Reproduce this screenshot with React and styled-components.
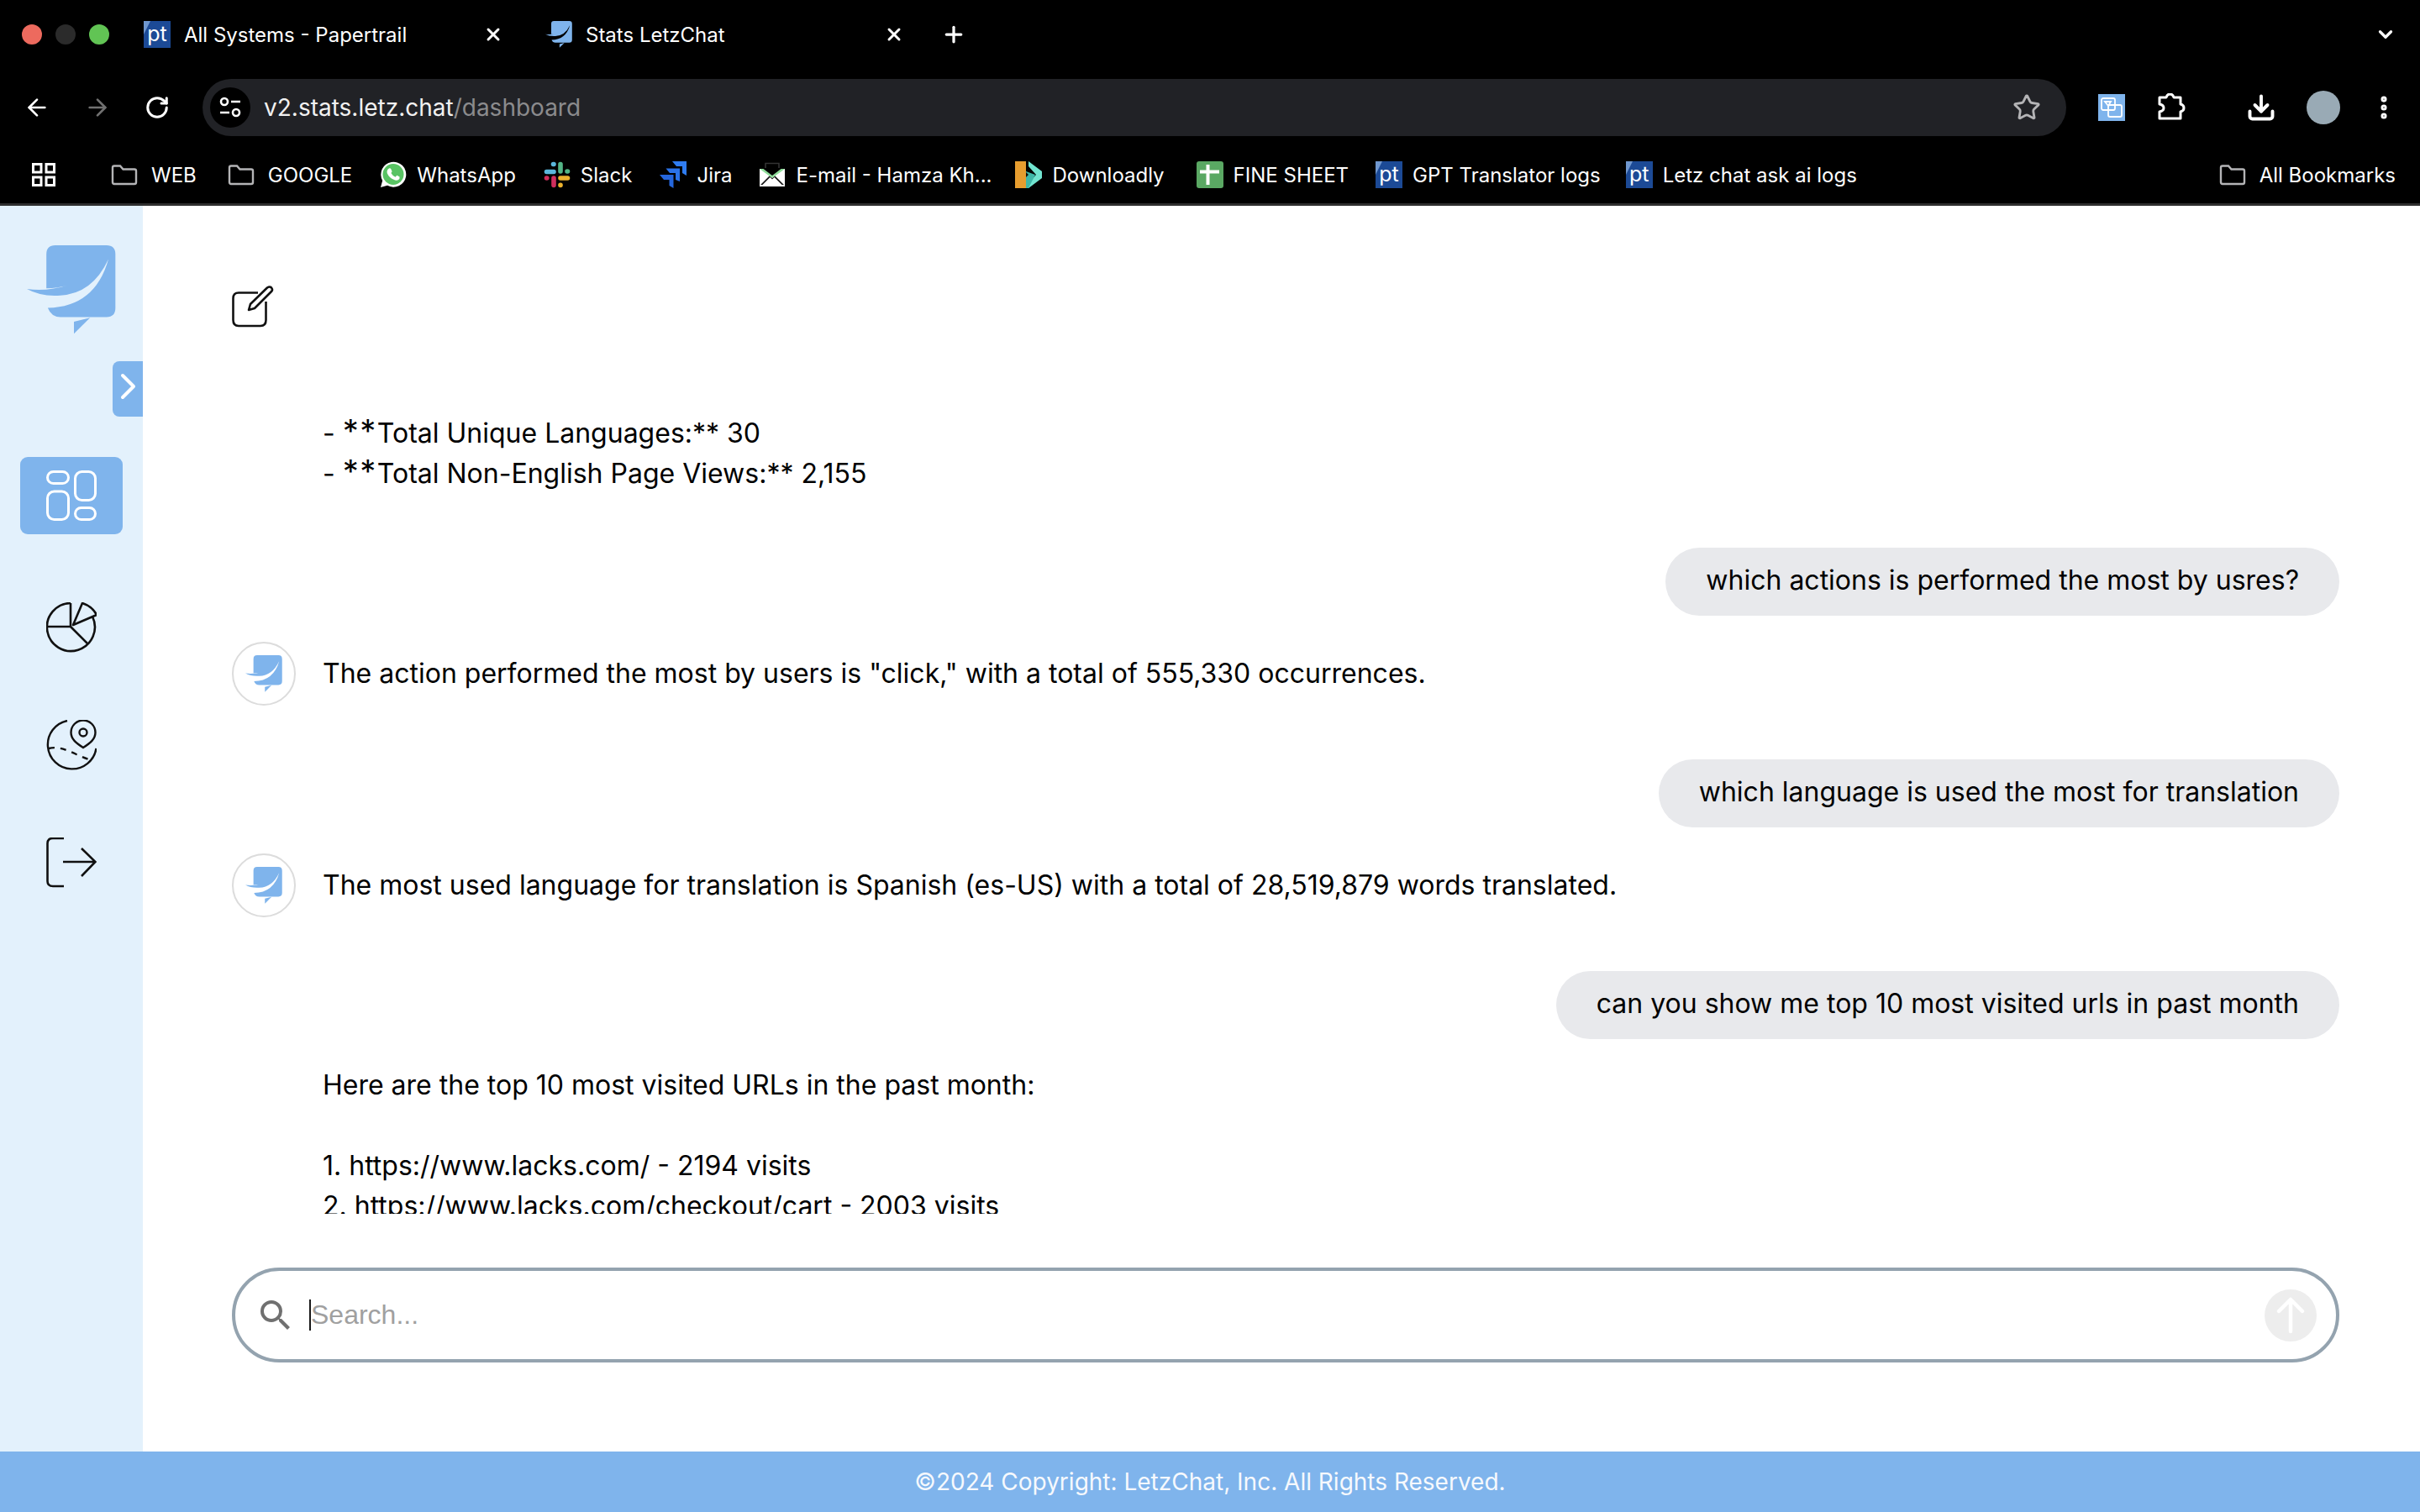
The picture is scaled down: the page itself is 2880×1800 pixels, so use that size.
import React from "react";
import styled, { createGlobalStyle } from "styled-components";
import {
  ArrowLeft,
  ArrowRight,
  RotateCw,
  Star,
  Download,
  MoreVertical,
  Plus,
  X,
  ChevronDown,
} from "lucide-react";
import { MdSearch } from "react-icons/md";

const GlobalStyle = createGlobalStyle`
  html, body {
    margin: 0;
    padding: 0;
    width: 2880px;
    height: 1800px;
    overflow: hidden;
    background: #fff;
    font-family: "Inter", "Liberation Sans", sans-serif;
  }
  * {
    box-sizing: border-box;
  }
`;

const Page = styled.div`
  width: 2880px;
  height: 1800px;
  display: flex;
  flex-direction: column;
`;

/* browser chrome */
const BrowserChrome = styled.header`
  height: 245px;
  flex: none;
  background: #000;
  color: #fff;
  border-bottom: 3px solid #2e2e2e;
  display: flex;
  flex-direction: column;
`;

const TabStrip = styled.div`
  height: 82px;
  display: flex;
  align-items: center;
  padding: 0 28px 0 26px;
`;

const TrafficLights = styled.div`
  display: flex;
  gap: 16px;
  margin-right: 41px;
`;

const Light = styled.span`
  width: 24px;
  height: 24px;
  border-radius: 50%;
  background: ${(p) => p.$color};
`;

const Tab = styled.div`
  width: ${(p) => p.$width}px;
  display: flex;
  align-items: center;
  gap: 16px;
  font-size: 24px;
  color: #fff;
  white-space: nowrap;
`;

const TabClose = styled(X)`
  margin-left: auto;
  margin-right: ${(p) => p.$inset}px;
  flex: none;
`;

const NewTab = styled(Plus)`
  margin-left: -14px;
`;

const TabMenu = styled(ChevronDown)`
  margin-left: auto;
`;

const Favicon = styled.span`
  width: 32px;
  height: 32px;
  flex: none;
  position: relative;
  background: #1c4a96;
  color: #fff;
  font-size: 25px;
  line-height: 30px;
  text-align: center;
  overflow: hidden;

  &::before {
    content: "";
    position: absolute;
    left: 0;
    top: 0;
    border-top: 16px solid #6f97cf;
    border-right: 8px solid transparent;
  }
`;

const Toolbar = styled.div`
  height: 68px;
  margin-top: 12px;
  display: flex;
  align-items: center;
  padding: 0 28px;
`;

const NavButtons = styled.div`
  display: flex;
  align-items: center;
  gap: 40px;
  margin-right: 39px;
`;

const Omnibox = styled.div`
  width: 2218px;
  height: 68px;
  flex: none;
  border-radius: 34px;
  background: #212226;
  display: flex;
  align-items: center;
  padding: 0 30px 0 9px;
  font-size: 28px;
`;

const SiteInfo = styled.span`
  width: 48px;
  height: 48px;
  flex: none;
  border-radius: 50%;
  background: #000;
  display: flex;
  align-items: center;
  justify-content: center;
  margin-right: 16px;
`;

const UrlHost = styled.span`
  color: #f1f1f1;
`;

const UrlPath = styled.span`
  color: #8b8b8d;
`;

const StarIcon = styled(Star)`
  margin-left: auto;
  color: #b4b4b6;
`;

const ToolbarActions = styled.div`
  display: flex;
  align-items: center;
  margin-left: 38px;
`;

const ExtensionIcon = styled.span`
  width: 32px;
  height: 32px;
  display: block;
  background: #7fb4ec;
  margin-right: 38px;
`;

const PuzzleIcon = styled.svg`
  width: 34px;
  height: 34px;
  margin-right: 72px;
`;

const DownloadIcon = styled(Download)`
  margin-right: 36px;
`;

const ProfileDot = styled.span`
  width: 40px;
  height: 40px;
  border-radius: 50%;
  background: #99aab5;
  margin-right: 35px;
`;

const BookmarksBar = styled.nav`
  height: 56px;
  margin-top: 18px;
  display: flex;
  align-items: center;
  padding: 0 28px 0 38px;
  font-size: 24px;
  white-space: nowrap;
`;

const AppsIcon = styled.svg`
  width: 28px;
  height: 28px;
  margin-right: 66px;
`;

const Bookmark = styled.div`
  display: flex;
  align-items: center;
  gap: ${(p) => p.$gap || 12}px;
  margin-right: ${(p) => p.$after || 33}px;
  margin-left: ${(p) => (p.$push ? "auto" : "0")};
`;

const BookmarkIcon = styled.svg`
  width: 32px;
  height: 32px;
  flex: none;
`;

/* app */
const AppBody = styled.div`
  flex: 1;
  min-height: 0;
  display: flex;
`;

const Sidebar = styled.aside`
  width: 170px;
  flex: none;
  background: #e3f1fc;
  position: relative;
  display: flex;
  flex-direction: column;
  align-items: center;
  padding-top: 47px;
`;

const SidebarLogo = styled.div`
  width: 106px;
  height: 106px;
  margin-bottom: 146px;
  align-self: flex-start;
  margin-left: 32px;
`;

const CollapseTab = styled.button`
  position: absolute;
  right: 0;
  top: 185px;
  width: 36px;
  height: 66px;
  border: 0;
  padding: 0 1px 6px 0;
  border-radius: 8px 0 0 8px;
  background: #7fb4ec;
  display: flex;
  align-items: center;
  justify-content: center;
`;

const NavList = styled.div`
  display: flex;
  flex-direction: column;
  align-items: center;
`;

const NavItem = styled.div`
  width: 122px;
  height: ${(p) => (p.$active ? 92 : 60)}px;
  margin-bottom: ${(p) => (p.$active ? 81 : 80)}px;
  border-radius: 9px;
  background: ${(p) => (p.$active ? "#7fb4ec" : "transparent")};
  color: ${(p) => (p.$active ? "#fff" : "#111")};
  display: flex;
  align-items: center;
  justify-content: center;
`;

const Main = styled.main`
  flex: 1;
  min-width: 0;
  display: flex;
  flex-direction: column;
  padding: 95px 96px 106px 106px;
`;

const EditButton = styled.div`
  width: 50px;
  height: 50px;
  flex: none;
  margin-bottom: 102px;
`;

const Messages = styled.section`
  flex: 1;
  min-height: 0;
  overflow: hidden;
  display: flex;
  flex-direction: column;
`;

const UserBubble = styled.div`
  align-self: flex-end;
  height: 81px;
  flex: none;
  padding: 0 48px;
  margin: 64px 0 31px;
  border-radius: 41px;
  background: #e8e9ec;
  color: #000;
  font-size: 32px;
  line-height: 78px;
  white-space: nowrap;
`;

const BotRow = styled.div`
  display: flex;
  align-items: ${(p) => (p.$top ? "flex-start" : "center")};
  gap: 32px;
  flex: none;
`;

const Avatar = styled.div`
  width: 76px;
  height: ${(p) => (p.$empty ? 0 : 76)}px;
  flex: none;
  border-radius: 50%;
  border: ${(p) => (p.$empty ? "0" : "2px solid #dcdcdc")};
  background: #fff;
  display: flex;
  align-items: center;
  justify-content: center;
`;

const BotText = styled.div`
  font-size: 32px;
  line-height: 48px;
  color: #000;
  white-space: pre-wrap;
`;

const Stars = styled.span`
  font-size: 38px;
  line-height: 0;
  letter-spacing: 1.5px;
`;

const Composer = styled.div`
  margin-top: 64px;
  height: 113px;
  flex: none;
  border: 4px solid #94a3af;
  border-radius: 57px;
  display: flex;
  align-items: center;
  padding: 0 23px 0 24px;
`;

const SearchIcon = styled(MdSearch)`
  color: #707070;
  flex: none;
  margin-right: 16px;
`;

const Caret = styled.span`
  width: 2px;
  height: 37px;
  flex: none;
  background: #1a1a1a;
`;

const SearchInput = styled.input`
  flex: 1;
  min-width: 0;
  border: 0;
  outline: 0;
  padding: 0;
  background: transparent;
  font-family: "Liberation Sans", Arial, sans-serif;
  font-size: 32px;

  &::placeholder {
    color: #a0a0a0;
    opacity: 1;
  }
`;

const SendButton = styled.button`
  width: 62px;
  height: 62px;
  flex: none;
  border: 0;
  padding: 0;
  border-radius: 50%;
  background: #ededed;
  display: flex;
  align-items: center;
  justify-content: center;
`;

const Footer = styled.footer`
  height: 72px;
  flex: none;
  background: #7fb4ec;
  color: #f6f9fd;
  font-size: 28px;
  display: flex;
  align-items: center;
  justify-content: center;
`;

const LogoMark = ({ size }) => (
  <svg width={size} height={size} viewBox="0 0 320 320" style={{ display: "block" }}>
    <path
      fill="#7fb4ec"
      d="M70 32Q70 0 102 0H286Q318 0 318 32V226Q318 258 286 258H120Q88 258 75 225Q245 222 293 50Q235 175 120 180Q50 185 0 157Q70 168 150 143Q110 155 70 155Z"
    />
    <path fill="#7fb4ec" d="M169 275L227 260L169 318Z" />
  </svg>
);

const Folder = () => (
  <BookmarkIcon viewBox="0 0 32 32" fill="none" stroke="#b4b4b6" strokeWidth="2.4">
    <path d="M2 7.5Q2 5.5 4 5.5H11L14.5 9.5H28Q30 9.5 30 11.5V25Q30 27 28 27H4Q2 27 2 25Z" />
  </BookmarkIcon>
);

const WhatsAppIcon = () => (
  <BookmarkIcon viewBox="0 0 32 32">
    <path fill="#fff" d="M1 31L3.2 23A15 15 0 1 1 9 28.8Z" />
    <circle cx="16" cy="15.5" r="12.5" fill="#58c363" />
    <path
      fill="#fff"
      d="M11 8.5Q12.5 8 13.2 9L14.6 12.2L13.4 14Q15 17 18.5 18.8L20.4 16.8L23.5 18.4Q24 20.5 22.5 21.8Q20 23.5 16.5 21.8Q11 19.5 8.8 14.2Q7.8 10.5 11 8.5Z"
    />
  </BookmarkIcon>
);

const SlackIcon = () => (
  <BookmarkIcon viewBox="0 0 32 32" strokeLinecap="round" strokeWidth="5.6" fill="none">
    <path stroke="#5ab7dc" d="M3.5 12.5H12M11.5 3.5H12" />
    <path stroke="#53b586" d="M20 3.5V12M28.5 12H28" />
    <path stroke="#ecb22e" d="M20 20H28.5M20 28.5V28.2" />
    <path stroke="#cf2e5d" d="M12 20V28.5M3.5 20H3.8" />
  </BookmarkIcon>
);

const JiraIcon = () => (
  <BookmarkIcon viewBox="0 0 32 32">
    <path fill="#2f7cf0" d="M15 0H32V17L27 14V6H20Z" />
    <path fill="#2a72e8" d="M7.5 8.5H24V24L19 22V14H12Z" />
    <path fill="#2566dc" d="M0 16H16.5V32L11.5 29V22H5Z" />
  </BookmarkIcon>
);

const MailIcon = () => (
  <BookmarkIcon viewBox="0 0 32 32">
    <path fill="none" stroke="#333" strokeWidth="1.6" d="M8 8V2.5H24V8" />
    <path fill="#fff" d="M1 9H31V30H1Z" />
    <path fill="#000" d="M2 28L13 17L16 20L19 17L30 28Z" opacity="0.9" />
    <path fill="#fff" d="M4.5 28L13.5 19L16 21.5L18.5 19L27.5 28Z" />
    <path fill="#8fdc9a" d="M1 9H31L16 20Z" />
    <path fill="#000" d="M5.5 9H26.5L16 17Z" />
  </BookmarkIcon>
);

const DownloadlyIcon = () => (
  <BookmarkIcon viewBox="0 0 32 32">
    <path fill="#e79d2f" d="M0 0H13V32H0Z" />
    <path fill="#71e4d0" d="M16 0L32 12V20L16 32L16 26L25 16L16 6Z" />
    <path fill="#3eb7a8" d="M13 12L24 16L16 32H13Z" />
    <path fill="#111" d="M13 13L16 16L13 19Z" />
  </BookmarkIcon>
);

const SheetIcon = () => (
  <BookmarkIcon viewBox="0 0 32 32">
    <rect width="32" height="32" rx="3" fill="#5aa863" />
    <path stroke="#fff" strokeWidth="4" d="M4 12.5H27M13.5 4V28" />
  </BookmarkIcon>
);

const DashboardIcon = () => (
  <svg width="60" height="60" viewBox="0 0 60 60" fill="none" stroke="currentColor" strokeWidth="3">
    <rect x="1.5" y="1.5" width="25" height="14" rx="7" />
    <rect x="34.5" y="1.5" width="24" height="34" rx="8" />
    <rect x="1.5" y="25" width="25" height="33.5" rx="8" />
    <rect x="34.5" y="44.5" width="24" height="14" rx="7" />
  </svg>
);

const PieIcon = () => (
  <svg width="60" height="60" viewBox="0 0 60 60" fill="none" stroke="currentColor" strokeWidth="2.6" strokeLinejoin="round">
    <path d="M29 1A28.5 28.5 0 1 0 55 17" />
    <path d="M29 1V29H1M29 29L49 49" />
    <path d="M32 27L43 1Q55 5 60 15Z" />
  </svg>
);

const GlobeIcon = () => (
  <svg width="60" height="60" viewBox="0 0 60 60" fill="none" stroke="currentColor" strokeWidth="2.4">
    <path d="M25 1A29 29 0 1 0 59.5 34" />
    <path d="M44 33C36 28 29.5 23 29.5 15A14.5 14.5 0 0 1 58.5 15C58.5 23 52 28 44 33Z" />
    <circle cx="44" cy="15" r="4.5" />
    <path d="M3 34C20 29 40 46 56 48" strokeDasharray="7 7" />
  </svg>
);

const LogoutIcon = () => (
  <svg width="60" height="60" viewBox="0 0 60 60" fill="none" stroke="currentColor" strokeWidth="2.6">
    <path d="M21 1H8Q1.5 1 1.5 7V52Q1.5 58 8 58H21" />
    <path d="M20 29H58M42 13L58.5 29L42 46" />
  </svg>
);

const bots = {
  action:
    'The action performed the most by users is "click," with a total of 555,330 occurrences.',
  language:
    "The most used language for translation is Spanish (es-US) with a total of 28,519,879 words translated.",
};

const App = () => (
  <Page>
    <GlobalStyle />
    <BrowserChrome>
      <TabStrip>
        <TrafficLights>
          <Light $color="#ed6a5e" />
          <Light $color="#2b2b2b" />
          <Light $color="#61c454" />
        </TrafficLights>
        <Tab $width={478}>
          <Favicon>pt</Favicon>
          All Systems - Papertrail
          <TabClose size={24} strokeWidth={3} $inset={50} />
        </Tab>
        <Tab $width={485}>
          <LogoMark size={32} />
          Stats LetzChat
          <TabClose size={24} strokeWidth={3} $inset={58} />
        </Tab>
        <NewTab size={30} strokeWidth={2.6} />
        <TabMenu size={26} strokeWidth={3} />
      </TabStrip>

      <Toolbar>
        <NavButtons>
          <ArrowLeft size={32} strokeWidth={2} />
          <ArrowRight size={32} strokeWidth={2} color="#717171" />
          <RotateCw size={30} strokeWidth={2.4} />
        </NavButtons>
        <Omnibox>
          <SiteInfo>
            <svg width="30" height="30" viewBox="0 0 30 30" fill="none" stroke="#fff" strokeWidth="2.6">
              <circle cx="8" cy="8" r="4" />
              <path d="M16 8H27M3 21H14" />
              <circle cx="22" cy="21" r="4" />
            </svg>
          </SiteInfo>
          <UrlHost>v2.stats.letz.chat</UrlHost>
          <UrlPath>/dashboard</UrlPath>
          <StarIcon size={34} strokeWidth={2} />
        </Omnibox>
        <ToolbarActions>
          <ExtensionIcon>
            <svg width="32" height="32" viewBox="0 0 32 32" fill="none" stroke="#fff" strokeWidth="1.8">
              <rect x="4" y="5" width="16" height="14" rx="2" />
              <rect x="12" y="13" width="16" height="14" rx="2" />
              <path d="M8 9H15L12 14Z" />
            </svg>
          </ExtensionIcon>
          <PuzzleIcon viewBox="0 0 34 34" fill="none" stroke="#fff" strokeWidth="3" strokeLinejoin="round">
            <path d="M3 5H11Q12 1 15.5 1Q19 1 20 5H28V13Q32 14 32 17.5Q32 21 28 22V30H3V22Q8 21 8 17.5Q8 14 3 13Z" />
          </PuzzleIcon>
          <DownloadIcon size={36} strokeWidth={2.6} />
          <ProfileDot />
          <MoreVertical size={34} strokeWidth={3} />
        </ToolbarActions>
      </Toolbar>

      <BookmarksBar>
        <AppsIcon viewBox="0 0 28 28" fill="none" stroke="#fff" strokeWidth="3">
          <rect x="1.5" y="1.5" width="9.5" height="9.5" />
          <rect x="17" y="1.5" width="9.5" height="9.5" />
          <rect x="1.5" y="17" width="9.5" height="9.5" />
          <rect x="17" y="17" width="9.5" height="9.5" />
        </AppsIcon>
        <Bookmark $gap={16} $after={37}>
          <Folder />
          WEB
        </Bookmark>
        <Bookmark $gap={16}>
          <Folder />
          GOOGLE
        </Bookmark>
        <Bookmark>
          <WhatsAppIcon />
          WhatsApp
        </Bookmark>
        <Bookmark>
          <SlackIcon />
          Slack
        </Bookmark>
        <Bookmark $after={32}>
          <JiraIcon />
          Jira
        </Bookmark>
        <Bookmark $after={28}>
          <MailIcon />
          E-mail - Hamza Kh...
        </Bookmark>
        <Bookmark $after={38}>
          <DownloadlyIcon />
          Downloadly
        </Bookmark>
        <Bookmark $after={32}>
          <SheetIcon />
          FINE SHEET
        </Bookmark>
        <Bookmark $after={30}>
          <Favicon>pt</Favicon>
          GPT Translator logs
        </Bookmark>
        <Bookmark>
          <Favicon>pt</Favicon>
          Letz chat ask ai logs
        </Bookmark>
        <Bookmark $push $gap={16} $after={1}>
          <Folder />
          All Bookmarks
        </Bookmark>
      </BookmarksBar>
    </BrowserChrome>

    <AppBody>
      <Sidebar>
        <SidebarLogo>
          <LogoMark size={106} />
        </SidebarLogo>
        <CollapseTab>
          <svg width="20" height="32" viewBox="0 0 20 32" fill="none" stroke="#fff" strokeWidth="4" strokeLinecap="round" strokeLinejoin="round">
            <path d="M4 3L17 16L4 29" />
          </svg>
        </CollapseTab>
        <NavList>
          <NavItem $active>
            <DashboardIcon />
          </NavItem>
          <NavItem>
            <PieIcon />
          </NavItem>
          <NavItem>
            <GlobeIcon />
          </NavItem>
          <NavItem>
            <LogoutIcon />
          </NavItem>
        </NavList>
      </Sidebar>

      <Main>
        <EditButton>
          <svg width="50" height="50" viewBox="0 0 50 50" fill="none" stroke="#111" strokeWidth="2.6" strokeLinejoin="round">
            <path d="M31 8.5H8Q1.5 8.5 1.5 15V41Q1.5 48 8 48H34Q40.5 48 40.5 41V19" />
            <path d="M20 29L22 22L42 2.5Q45 0.5 47 2.5Q49 5 47 7L27 27Z" />
          </svg>
        </EditButton>

        <Messages>
          <BotRow $top>
            <Avatar $empty />
            <BotText>
              - <Stars>**</Stars>Total Unique Languages:** 30{"\n"}- <Stars>**</Stars>Total Non-English Page Views:** 2,155
            </BotText>
          </BotRow>

          <UserBubble>which actions is performed the most by usres?</UserBubble>
          <BotRow>
            <Avatar>
              <LogoMark size={44} />
            </Avatar>
            <BotText>{bots.action}</BotText>
          </BotRow>

          <UserBubble>which language is used the most for translation</UserBubble>
          <BotRow>
            <Avatar>
              <LogoMark size={44} />
            </Avatar>
            <BotText>{bots.language}</BotText>
          </BotRow>

          <UserBubble>can you show me top 10 most visited urls in past month</UserBubble>
          <BotRow $top>
            <Avatar $empty />
            <BotText>
              {"Here are the top 10 most visited URLs in the past month:\n\n1. https://www.lacks.com/ - 2194 visits\n2. https://www.lacks.com/checkout/cart - 2003 visits"}
            </BotText>
          </BotRow>
        </Messages>

        <Composer>
          <SearchIcon size={48} />
          <Caret />
          <SearchInput placeholder="Search..." readOnly />
          <SendButton>
            <svg width="34" height="44" viewBox="0 0 34 44" fill="none" stroke="#fff" strokeWidth="4.5" strokeLinecap="round" strokeLinejoin="round">
              <path d="M17 41V4M3 17L17 3L31 17" />
            </svg>
          </SendButton>
        </Composer>
      </Main>
    </AppBody>

    <Footer>©2024 Copyright: LetzChat, Inc. All Rights Reserved.</Footer>
  </Page>
);

export default App;
